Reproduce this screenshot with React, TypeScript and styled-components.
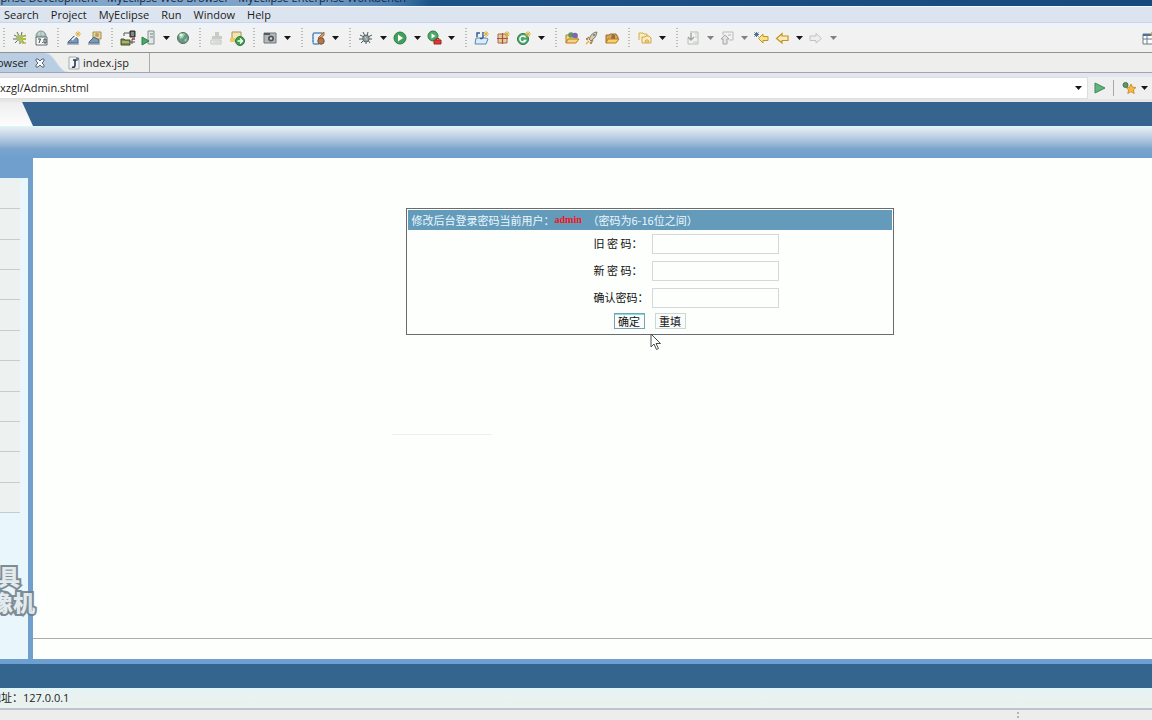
import React from "react";
import styled, { createGlobalStyle } from "styled-components";

const GlobalStyle = createGlobalStyle`
  * { box-sizing: border-box; }
  html, body { margin: 0; height: 100%; overflow: hidden; }
  body { font: 11px/16px "Open Sans", "Noto Sans CJK SC", sans-serif; color: #1c1c1c; background: #eef0f0; }
  #root { height: 100%; }
  button { padding: 0; border: 0; background: none; font: inherit; color: inherit; display: flex; align-items: center; justify-content: center; }
  svg { display: block; flex: none; }
`;

const Window = styled.div`
  display: flex;
  flex-direction: column;
  min-height: 100vh;
  position: relative;
  overflow: hidden;
`;
const TitleBar = styled.header`
  height: 6px;
  display: flex;
  overflow: hidden;
  background: linear-gradient(90deg, #86a8c9 0, #7ba2c9 300px, #4d80b2 390px, #1d5488 430px, #174a7c 100%);
`;
const TitleText = styled.div`
  width: 406px;
  height: 6px;
  display: flex;
  justify-content: flex-end;
  align-items: flex-end;
  white-space: nowrap;
  line-height: 16px;
  color: #10263e;
`;
const MenuBar = styled.nav`
  height: 17px;
  display: flex;
  gap: 12px;
  padding-left: 4px;
  border-top: 1px solid #f4f8fc;
  border-bottom: 1px solid #c9d5e8;
  background: #dce4ef;
`;
const MenuItem = styled.button`
  height: 15px;
`;
const Toolbar = styled.div`
  height: 30px;
  display: flex;
  align-items: center;
  border-bottom: 1px solid #929292;
  background: linear-gradient(#eef3fa, #f1f2f2 8px, #f1f1f0);
`;
const Group = styled.div<{ $tight?: boolean; $narrow?: boolean }>`
  display: flex;
  align-items: center;
  gap: ${(p) => (p.$tight ? 4 : 5)}px;
  &::before {
    content: "";
    width: 2px;
    height: 20px;
    margin-left: ${(p) => (p.$narrow ? 5 : 8)}px;
    margin-right: ${(p) => (p.$tight ? 3 : 2)}px;
    background: repeating-linear-gradient(#b9bcbc 0 1px, transparent 1px 3px);
  }
  &:first-child::before { margin-left: 3px; }
`;
const Tool = styled.div`
  display: flex;
`;
const ToolButton = styled.button`
  width: 16px;
  height: 16px;
`;
const ArrowButton = styled.button<{ $last?: boolean }>`
  width: 18px;
  height: 16px;
  margin-right: ${(p) => (p.$last ? 0 : -5)}px;
`;
const Perspective = styled.div`
  width: 10px;
  overflow: hidden;
  margin-left: auto;
`;
const Tabs = styled.div`
  height: 20px;
  display: flex;
  border-bottom: 1px solid #a3a5a8;
  background: #eeefed;
`;
const ActiveTab = styled.button`
  height: 19px;
  margin-left: -3px;
  background: #b9cde3;
  gap: 7px;
`;
const Tab = styled.button`
  height: 19px;
  width: 82px;
  gap: 3px;
  border-right: 1px solid #a9abac;
  justify-content: flex-start;
`;
const AddressBar = styled.div`
  height: 29px;
  display: flex;
  align-items: center;
  background: #efefef;
  border-top: 4px solid #e2e6f1;
  border-bottom: 3px solid #e6e6e6;
`;
const AddressBox = styled.div`
  flex: 1;
  height: 22px;
  display: flex;
  align-items: center;
  border: 1px solid #dedede;
  border-left: 0;
  background: #fff;
`;
const AddressInput = styled.input`
  flex: 1;
  border: 0;
  padding: 0;
  margin-left: -4px;
  outline: 0;
  background: none;
  font: inherit;
  color: inherit;
`;
const AddressTools = styled.div`
  width: 64px;
  display: flex;
  align-items: center;
  padding-left: 6px;
`;
const Rule = styled.span`
  width: 1px;
  height: 16px;
  margin: 0 7px 0 7px;
  background: #a9a9a9;
`;
const SiteHeader = styled.div`
  height: 24px;
  background: #36648e;
`;
const SiteTab = styled.div`
  width: 33px;
  height: 24px;
  background: linear-gradient(#eeeeee, #fdfdfd);
  clip-path: polygon(0 0, 67% 0, 100% 100%, 0 100%);
`;
const SiteBand = styled.div`
  height: 32px;
  background: linear-gradient(#dff6fb 0, #dfe8f1 3px, #b3c9e1 13px, #7ba5cb 23px, #6d9fd0 100%);
`;
const Frame = styled.div`
  flex: 1;
  display: flex;
  gap: 5px;
  background: #709fce;
`;
const Sidebar = styled.aside`
  width: 28px;
  margin: 20px 0 0;
  background: #e9f6fc;
  border-top: 1px solid #dcf4fd;
`;
const SidebarItems = styled.ul`
  height: 334px;
  width: 20px;
  margin: 0;
  padding: 0;
  list-style: none;
  display: grid;
  grid-template-rows: repeat(11, 1fr);
`;
const SidebarItem = styled.li`
  background: #edf1f0;
  border-bottom: 1px solid #c6cccb;
`;
const Content = styled.main`
  flex: 1;
  display: flex;
  flex-direction: column;
  background: #fdfffd;
`;
const Body = styled.div`
  flex: 1;
  padding: 50px 0 0 114px;
  border-bottom: 1px solid #ababab;
`;
const ContentFoot = styled.div`
  height: 20px;
`;
const Panel = styled.form`
  position: relative;
  width: 488px;
  height: 127px;
  margin: 0 auto;
  border: 1px solid #686c6e;
  padding: 1px;
  font: 11px/16px "Noto Sans CJK SC", sans-serif;
  color: #111;
`;
const PanelTitle = styled.div`
  height: 20px;
  display: flex;
  align-items: center;
  padding-left: 4px;
  white-space: nowrap;
  background: #659bba;
  color: #e9f8ff;
`;
const User = styled.strong`
  width: 33px;
  color: #f01420;
  font: bold 10px/16px "Liberation Serif", serif;
`;
const Field = styled.div`
  height: 27px;
  display: flex;
  align-items: center;
`;
const Label = styled.label`
  width: 244px;
  padding: 0 0 2px 186px;
  white-space: nowrap;
`;
const TextBox = styled.input`
  width: 127px;
  height: 20px;
  border: 1px solid #d3d8d8;
  background: #fdfffd;
`;
const Actions = styled.div`
  display: flex;
  justify-content: center;
  gap: 10px;
  padding-top: 2px;
`;
const FormButton = styled.button<{ $primary?: boolean }>`
  width: 31px;
  height: 16px;
  border: 1px solid ${(p) => (p.$primary ? "#75a3b3" : "#cfd4d4")};
  box-shadow: ${(p) => (p.$primary ? "inset 0 1px #7fdbe8" : "none")};
  background: #fafcfb;
`;
const Cursor = styled.svg`
  position: absolute;
  left: 243px;
  top: 124px;
`;
const FaintRule = styled.hr`
  width: 100px;
  height: 1px;
  margin: 99px 0 0 245px;
  border: 0;
  background: #eeefee;
`;
const SiteFooter = styled.div`
  height: 29px;
  background: #34658f;
  border-top: 5px solid #6d9fd0;
`;
const Status = styled.div`
  height: 22px;
  display: flex;
  padding-top: 2px;
  margin-left: -10px;
  background: linear-gradient(#dbf8fd 0, #e8f3f1 3px, #eaf1ee);
  border-bottom: 2px solid #c0c3ce;
`;
const BottomBar = styled.footer`
  height: 10px;
  display: flex;
  justify-content: flex-end;
  padding-right: 133px;
  background: #ededee;
`;
const Grip = styled.span`
  width: 2px;
  background: repeating-linear-gradient(transparent 0 2px, #b5b5b5 2px 4px);
`;
const Watermark = styled.div`
  position: absolute;
  left: -20px;
  bottom: 106px;
  width: 56px;
  font: 900 22px/26px "Noto Sans CJK SC", sans-serif;
  color: #e3eaee;
  -webkit-text-stroke: 4px #72818a;
  paint-order: stroke fill;
  white-space: nowrap;
  opacity: 0.9;
`;
const WatermarkLine = styled.div<{ $inset?: boolean }>`
  display: flex;
  justify-content: flex-end;
  padding-right: ${(p) => (p.$inset ? 16 : 1)}px;
`;

const Icon = ({ children }: { children: React.ReactNode }) => (
  <svg width="16" height="16" viewBox="0 0 16 16" fill="none" aria-hidden="true">{children}</svg>
);
const Caret = ({ pale }: { pale?: boolean }) => (
  <svg width="7" height="4" viewBox="0 0 7 4" aria-hidden="true">
    <path d="M0 0H7L3.5 4Z" fill={pale ? "#80827f" : "#161616"} />
  </svg>
);
const Spark = ({ x = 12, y = 4 }: { x?: number; y?: number }) => (
  <path d={`M${x} ${y - 3}v6M${x - 3} ${y}h6M${x - 2} ${y - 2}l4 4M${x + 2} ${y - 2}l-4 4`} stroke="#d9b23c" strokeWidth=".9" />
);
const bugLegs = "M5 2l2 4M10 2L9 6M2 5l4 2M1 9h4M3 13l3-3M8 14v-3M12 13l-2-3M14 9h-4M14 5l-4 2";

const icons: Record<string, React.ReactNode> = {
  bugTree: <><path d={bugLegs} stroke="#5b6d5c" /><circle cx="7" cy="8" r="3" fill="#a8bc71" /><path d="M10 6h4M10 9h4M10 13h4M10 5v8" stroke="#b7ba35" strokeWidth="1.5" /></>,
  globe2: <><circle cx="8" cy="6" r="5" fill="#c5d6d2" stroke="#7f9893" /><path d="M3 6h10M8 1v10M5 2q-2 4 0 7M11 2q2 4 0 7" stroke="#8ca9a2" strokeWidth=".8" /><path d="M3 7h11v8H3Z" fill="#f8f8f8" stroke="#5f6e6d" /><path d="M5 9h2.500l-1.500 4M9 12.500h.8M11 9h2v4h-2Z" stroke="#39484b" /></>,
  deploy: <><path d="M2 12l6-6 4 3v4H2Z" fill="#7998bd" stroke="#4c6488" /><path d="M6 10l6-6" stroke="#fff" strokeWidth="1.500" /><path d="M1 14h12" stroke="#71808e" /><Spark /></>,
  deployPhoto: <><path d="M6 2h8v7H6Z" fill="#ecd98e" stroke="#9b8f5a" /><circle cx="10" cy="5" r="2" fill="#bf9a68" /><path d="M2 12l5-5 5 3v3H2Z" fill="#7e98b8" stroke="#4f6685" /><path d="M1 14h12" stroke="#71808e" /></>,
  server: <><path d="M4 6V3h7M12 9v5M10 12h5" stroke="#555" /><path d="M10 1h5v6h-5Z" fill="#555" stroke="#2e2e2e" /><path d="M11 3h3M11 5h3" stroke="#bbb" /><path d="M1 9h3l1 1h5v5H1Z" fill="#7b8b4c" stroke="#48552c" /><path d="M2 12h7" stroke="#e1d984" /><path d="M12 9h3" stroke="#b12b24" strokeWidth="1.500" /></>,
  serverRun: <><path d="M7 1h6v13H7Z" fill="#dfe6e6" stroke="#84908f" /><path d="M9 4h3M9 7h3" stroke="#74807f" /><path d="M1 7l7 4-7 4Z" fill="#4aa765" stroke="#2f7f49" /></>,
  globe: <><circle cx="8" cy="8" r="5.500" fill="#6b9687" stroke="#506f67" /><path d="M4 5q4-3 6-1l-2 4-3 1ZM9 10l3-2-1 4Z" fill="#9ed39c" /><circle cx="6" cy="5" r="1.500" fill="#e7f7ee" /></>,
  stampPale: <><path d="M7 2h4v4h3v3H4V6h3Z" fill="#c9cbc9" /><path d="M3 10h10v4H3Z" stroke="#bfc2bf" /><path d="M5 12h7" stroke="#c3c5c3" /></>,
  importGo: <><path d="M3 2h9v9H3Z" fill="#f2e5b0" stroke="#a59358" /><path d="M1 8h5v4H1Z" fill="#edc96b" /><circle cx="11" cy="11" r="4.500" fill="#3d9e4d" stroke="#2a7a38" /><path d="M8.500 11h5M11 8.500l2.500 2.500-2.500 2.500" stroke="#fff" strokeWidth="1.300" /></>,
  camera: <><path d="M2 3h12v10H2Z" fill="#b4b8ba" stroke="#71767a" /><path d="M2 4h6" stroke="#565a5c" strokeWidth="2" /><circle cx="9" cy="8.500" r="3" fill="#505659" /><circle cx="9" cy="8.500" r="1.200" fill="#d5dadd" /></>,
  report: <><path d="M12 4V3H4q-1 0-1 2v7q0 2 1 2h5" fill="#e8f1fa" stroke="#5d8abb" strokeWidth="1.300" /><path d="M2 5h2M2 8h2M2 11h2" stroke="#5d8abb" /><path d="M14 2l-6 6 2 2 4-5Z" fill="#df9d52" stroke="#a86c2f" /><circle cx="11" cy="11" r="3.200" fill="#b07a50" stroke="#755036" /></>,
  bug: <><path d={bugLegs} stroke="#4f5b5d" /><ellipse cx="8" cy="8.500" rx="3.200" ry="3.500" fill="#8f9f9d" stroke="#596665" /><path d="M7 7l2 3" stroke="#c9d3ce" /></>,
  run: <><circle cx="8" cy="8" r="6" fill="#41a15b" stroke="#2b7c43" /><path d="M6 4.500l5 3.500-5 3.500Z" fill="#fff" /></>,
  runTools: <><circle cx="7" cy="6" r="5" fill="#4ca967" stroke="#2d7d47" /><path d="M5.500 3.500l4 2.500-4 2.500Z" fill="#fff" /><path d="M8 10h7v4H8Z" fill="#d63c34" stroke="#9d2922" /><path d="M10 10V8.500h3V10" stroke="#9d2922" /></>,
  newProject: <><path d="M2 8h10l2 1-2 5H1Z" fill="#dcecf7" stroke="#5686b5" /><path d="M3 7V3h3M9 2v5q0 2-3 1.500" stroke="#315fa0" strokeWidth="1.500" /><Spark /></>,
  newPackage: <><path d="M3 4h9v9H3Z" fill="#e7c9a6" stroke="#a76c47" /><path d="M7.500 3v11M2 8.500h11" stroke="#a5563a" strokeWidth="1.200" /><Spark /></>,
  newClass: <><circle cx="7" cy="9" r="5.500" fill="#4ba56a" stroke="#2b7b4a" /><path d="M9.500 7.500a3 3 0 1 0 0 3H7.500" stroke="#fff" strokeWidth="1.500" /><Spark /></>,
  openType: <><path d="M2 13V5h4l1 1h6v3" fill="#f2d486" stroke="#b17e31" /><circle cx="7" cy="5" r="2.800" fill="#5a9964" /><circle cx="11" cy="5.500" r="2.800" fill="#7c68b0" /><path d="M2 13l2-4h11l-3 4Z" fill="#f7d37b" stroke="#b97f28" /></>,
  rocket: <><path d="M13 2q-5 0-8 7l2 2q6-4 6-9Z" fill="#d2cbb7" stroke="#7e7a6c" /><path d="M5 7L2 9l2 1M9 10l-2 4-1-2" fill="#cf9f58" stroke="#a57b3e" /><path d="M2 14l3-3" stroke="#e5ae43" strokeWidth="1.500" /><circle cx="10" cy="5" r="1" fill="#6c7688" /></>,
  openFolder: <><path d="M2 13V5h3l1-1h6l2 3v3" fill="#d9a457" stroke="#9c6f2c" /><path d="M8 4l3 1v4H7Z" fill="#8f7047" /><path d="M2 13l2-4h11l-3 4Z" fill="#fad06b" stroke="#b27c24" /></>,
  folders: <><path d="M2 10V3h4l1 1h3v3" fill="#faedbd" stroke="#d2ac53" /><path d="M5 13V7h3l1-1h3l2 2v5Z" fill="#fbedbd" stroke="#d2a646" /><path d="M8 12q0-3 3-2l1 2Z" stroke="#d2a646" /></>,
  nextNote: <><path d="M5 2h8v12H3V8" stroke="#b9bcb9" /><path d="M6 3v7M3 7l3 3 3-3" stroke="#a1a5a1" strokeWidth="1.400" /><path d="M10 4h2M10 7h2M8 12h4" stroke="#c1c3c1" /></>,
  prevNote: <><path d="M4 5V2h10v8h-4" stroke="#b9bcb9" /><path d="M2 9l4-4 4 4H8v5H4V9Z" fill="#e3e4e3" stroke="#a4a7a4" /><path d="M9 5h3" stroke="#b3b6b3" /></>,
  lastEdit: <><path d="M15 6.500H10V4L5.500 8.500 10 13v-2.500h5Z" fill="#f8e28a" stroke="#c29428" /><path d="M3.500 2v5M1 4.500h5M1.500 2.500l4 4M5.500 2.500l-4 4" stroke="#526d96" /></>,
  back: <><path d="M14 6H8V3.500L2.500 8.500 8 13v-2.500h6Z" fill="#fbecb3" stroke="#c49227" strokeWidth="1.200" /></>,
  forward: <><path d="M2 6h6V3.500l5.500 5L8 13v-2.500H2Z" fill="#eeeeed" stroke="#c1c3c1" /></>,
};

type Entry = [name: string, label: string, arrow?: "dark" | "pale"];
const groups: { tools: Entry[]; tight?: boolean }[] = [
  { tools: [["bugTree", "Debug server"], ["globe2", "Web 2.0 browser"]] },
  { tools: [["deploy", "Deploy"], ["deployPhoto", "Image deploy"]] },
  { tools: [["server", "Deploy project"], ["serverRun", "Run server", "dark"], ["globe", "Open browser"]] },
  { tools: [["stampPale", "Validate"], ["importGo", "Import"]] },
  { tools: [["camera", "Capture", "dark"]] },
  { tools: [["report", "New report", "dark"]] },
  { tools: [["bug", "Debug", "dark"], ["run", "Run", "dark"], ["runTools", "External tools", "dark"]] },
  { tools: [["newProject", "New Java project"], ["newPackage", "New package"], ["newClass", "New class", "dark"]] },
  { tight: true, tools: [["openType", "Open type"], ["rocket", "Launch"], ["openFolder", "Open folder"]] },
  { tight: true, tools: [["folders", "Folders", "dark"]] },
  { tools: [["nextNote", "Next annotation", "pale"], ["prevNote", "Previous annotation", "pale"], ["lastEdit", "Last edit"], ["back", "Back", "dark"], ["forward", "Forward", "pale"]] },
];
const menus = ["Search", "Project", "MyEclipse", "Run", "Window", "Help"];
const fields = [
  { id: "old", label: "旧 密 码：" },
  { id: "new", label: "新 密 码：" },
  { id: "confirm", label: "确认密码：" },
];

export default function App() {
  return (
    <Window>
      <GlobalStyle />
      <TitleBar><TitleText>MyEclipse Enterprise Development - MyEclipse Web Browser - MyEclipse Enterprise Workbench</TitleText></TitleBar>
      <MenuBar>{menus.map((m) => <MenuItem key={m} type="button">{m}</MenuItem>)}</MenuBar>
      <Toolbar>
        {groups.map((g, i) => (
          <Group key={i} $tight={g.tight} $narrow={i > 0 && !!groups[i - 1].tools[groups[i - 1].tools.length - 1][2]}>
            {g.tools.map(([name, label, arrow], j) => (
              <Tool key={name}>
                <ToolButton type="button" aria-label={label}><Icon>{icons[name]}</Icon></ToolButton>
                {arrow && <ArrowButton type="button" aria-label={`${label} options`} $last={j === g.tools.length - 1}><Caret pale={arrow === "pale"} /></ArrowButton>}
              </Tool>
            ))}
          </Group>
        ))}
        <Perspective>
          <ToolButton type="button" aria-label="Open perspective">
            <Icon><path d="M1 4h13v10H1Z" fill="#fff" stroke="#687b84" /><path d="M1 5h9" stroke="#4d6fa3" strokeWidth="2" /><path d="M5 5v9M1 9h9" stroke="#687b84" /><Spark x={11} y={4} /></Icon>
          </ToolButton>
        </Perspective>
      </Toolbar>
      <Tabs>
        <ActiveTab type="button">
          owser
          <svg width="10" height="10" viewBox="0 0 10 10"><path d="M1 1h2l2 2 2-2h2v2L7 5l2 2v2H7L5 7 3 9H1V7l2-2-2-2Z" fill="#f5f9fc" stroke="#5c6874" /></svg>
        </ActiveTab>
        <svg width="23" height="19" viewBox="0 0 23 19"><path d="M0 0C10 0 13 19 23 19H0Z" fill="#b9cde3" /><path d="M0 0C10 0 13 19 23 19" fill="none" stroke="#d5dfe9" /></svg>
        <Tab type="button">
          <svg width="12" height="14" viewBox="0 0 12 14" fill="none"><path d="M1 1h7l3 3v9H1Z" fill="#f2f4f5" stroke="#a3abb2" /><path d="M7 4v5q0 3-3 2M5 4h4" stroke="#26374d" strokeWidth="1.600" /><circle cx="9.500" cy="3" r="1.800" fill="#6683a0" /></svg>
          index.jsp
        </Tab>
      </Tabs>
      <AddressBar>
        <AddressBox>
          <AddressInput aria-label="Address" defaultValue="/xzgl/Admin.shtml" />
          <ArrowButton type="button" aria-label="Address history" $last><Caret /></ArrowButton>
        </AddressBox>
        <AddressTools>
          <button type="button" aria-label="Go"><svg width="12" height="12" viewBox="0 0 12 12"><path d="M1 1l10 5-10 5Z" fill="#62b47c" stroke="#39895a" /></svg></button>
          <Rule />
          <ToolButton type="button" aria-label="Favorites">
            <Icon><path d="M10 4l1.500 3.200 3.500.3-2.600 2.400.8 3.600L10 11.600 6.800 13.500l.8-3.600L5 7.500l3.500-.3Z" fill="#f3b945" stroke="#cf922e" /><circle cx="4.500" cy="5" r="2.500" fill="#5f9868" stroke="#3f7750" /></Icon>
          </ToolButton>
          <ArrowButton type="button" aria-label="Favorites list" $last><Caret /></ArrowButton>
        </AddressTools>
      </AddressBar>
      <SiteHeader><SiteTab /></SiteHeader>
      <SiteBand />
      <Frame>
        <Sidebar><SidebarItems>{Array.from({ length: 11 }, (_, i) => <SidebarItem key={i} />)}</SidebarItems></Sidebar>
        <Content>
          <Body>
            <Panel onSubmit={(e) => e.preventDefault()}>
              <PanelTitle>
                <span>修改后台登录密码 </span><span>当前用户：</span><User>admin</User><span>（密码为6-16位之间）</span>
              </PanelTitle>
              {fields.map((f) => (
                <Field key={f.id}>
                  <Label htmlFor={f.id}>{f.label}</Label>
                  <TextBox id={f.id} type="password" />
                </Field>
              ))}
              <Actions>
                <FormButton type="submit" $primary>确定</FormButton>
                <FormButton type="reset">重填</FormButton>
              </Actions>
              <Cursor width="12" height="18" viewBox="0 0 12 18"><path d="M1 1v13l3-3 2.500 5.500 2-1L6 10.500h4.500Z" fill="#fff" stroke="#4a4d50" /></Cursor>
            </Panel>
            <FaintRule />
          </Body>
          <ContentFoot />
        </Content>
      </Frame>
      <SiteFooter />
      <Status>地址：127.0.0.1</Status>
      <BottomBar><Grip /></BottomBar>
      <Watermark><WatermarkLine $inset>工具</WatermarkLine><WatermarkLine>像机</WatermarkLine></Watermark>
    </Window>
  );
}
